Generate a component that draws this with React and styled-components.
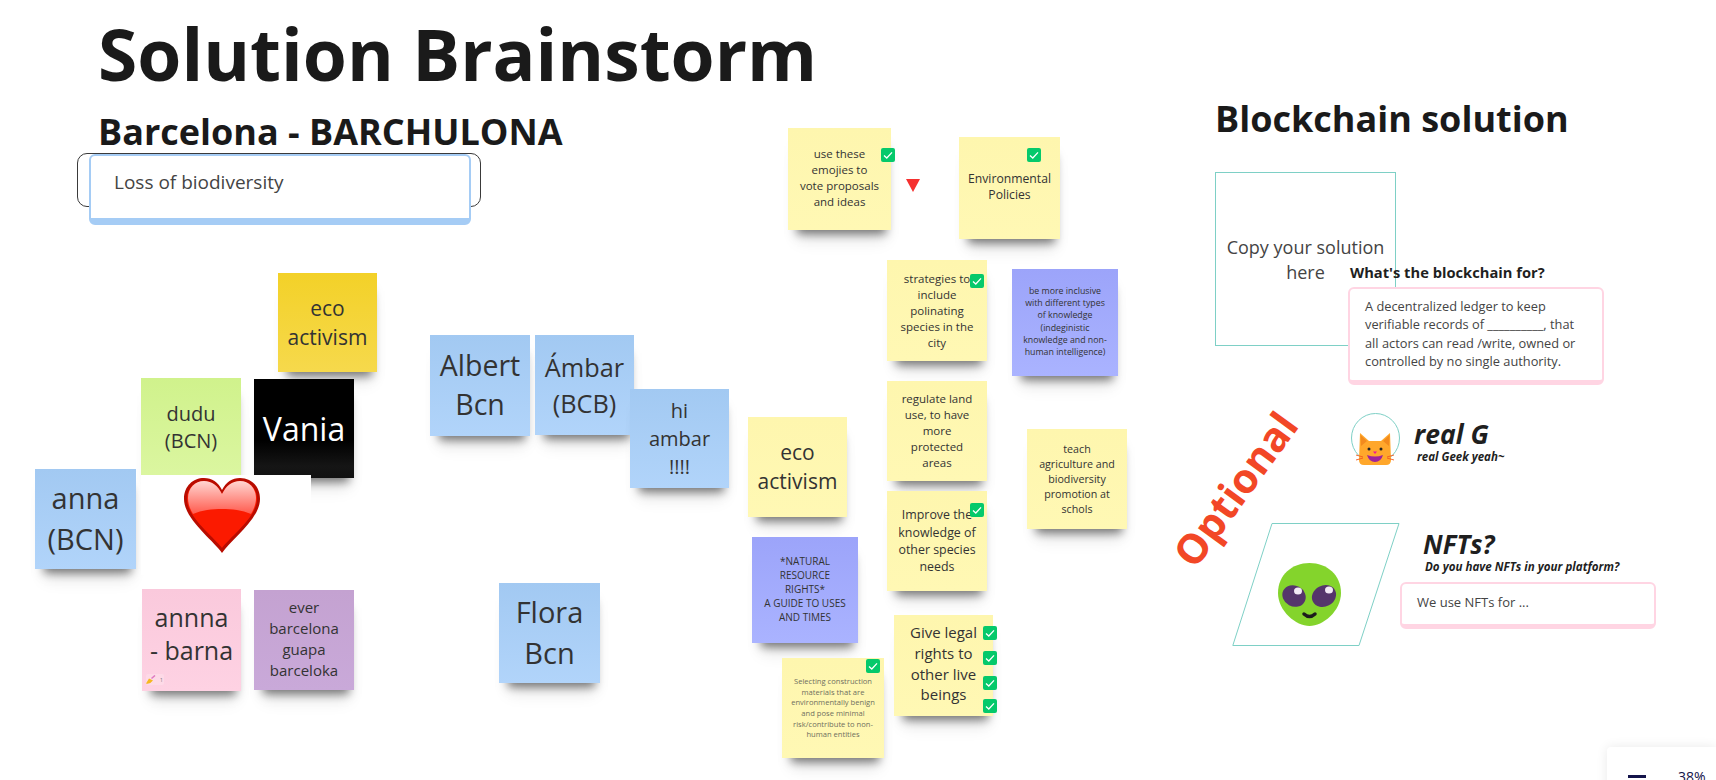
import React from "react";
import styled, { createGlobalStyle, css } from "styled-components";

const Global = createGlobalStyle`
  html, body { margin: 0; padding: 0; background: #fff; overflow: hidden; }
  body { font-family: "Open Sans", "Liberation Sans", sans-serif; color: #1a1a1a; }
`;

const at = css`
  position: absolute;
  left: ${(p) => p.$x}px;
  top: ${(p) => p.$y}px;
`;

const Board = styled.main`
  position: relative;
  width: 1716px;
  height: 780px;
  overflow: hidden;
  background: #fff;
`;

const Heading = styled.h1`
  ${at}
  margin: 0;
  font-size: ${(p) => p.$size}px;
  line-height: 1;
  font-weight: 700;
  color: #1a1a1a;
  white-space: nowrap;
`;

const Frame = styled.div`
  ${at}
  box-sizing: border-box;
  width: 404px;
  height: 54px;
  border: 1px solid #3a3a3a;
  border-radius: 10px;
`;

const Card = styled.div`
  ${at}
  box-sizing: border-box;
  width: ${(p) => p.$w}px;
  height: ${(p) => p.$h}px;
  padding: ${(p) => p.$pad};
  background: #fff;
  border: ${(p) => p.$b}px solid ${(p) => p.$c};
  border-bottom-width: ${(p) => p.$bb}px;
  border-radius: 6px;
  font-size: ${(p) => p.$size}px;
  line-height: ${(p) => p.$lh}px;
  color: #444;
  white-space: nowrap;
`;

const palette = {
  gold: "linear-gradient(#f3d128, #f6d94c)",
  lime: "linear-gradient(#d0f28c, #dbf6a0)",
  black: "linear-gradient(#000 62%, #151515 88%, #111)",
  blue: "linear-gradient(#a2c9f2, #b1d4fa)",
  pink: "linear-gradient(#fac9dc, #fed2e3)",
  purple: "linear-gradient(#c4a2d1, #c9a9d9)",
  yellow: "linear-gradient(#fef6ae, #fff8b4)",
  indigo: "linear-gradient(#9ca4fa, #aab3ff)",
};

const Note = styled.div`
  ${at}
  box-sizing: border-box;
  width: ${(p) => p.$w}px;
  height: ${(p) => p.$h}px;
  padding-bottom: ${(p) => (p.$up || 0) * 2}px;
  display: flex;
  flex-direction: column;
  align-items: center;
  justify-content: center;
  text-align: center;
  background: ${(p) => palette[p.$tone]};
  color: ${(p) => (p.$tone === "black" ? "#fff" : p.$ink || "#333")};
  font-size: ${(p) => p.$size}px;
  line-height: ${(p) => p.$lh}px;
  box-shadow: 2px 11px 9px -7px rgba(0, 0, 0, 0.5), 2px 18px 16px -8px rgba(0, 0, 0, 0.1);
  white-space: nowrap;
`;

const Line = styled.span`
  display: block;
`;

const Check = styled.svg`
  ${at}
  width: 14px;
  height: 14px;
`;

const Patch = styled.div`
  ${at}
  width: 170px;
  height: 100px;
  background: #fff;
`;

const Drawing = styled.svg`
  ${at}
  overflow: visible;
`;

const Outline = styled.div`
  ${at}
  box-sizing: border-box;
  width: 181px;
  height: 174px;
  border: 1px solid #7ed0c6;
`;

const Prompt = styled.p`
  margin: 62px 0 0;
  text-align: center;
  font-size: 18px;
  line-height: 25px;
  color: #444;
`;

const Label = styled.div`
  ${at}
  font-size: ${(p) => p.$size}px;
  line-height: 1;
  font-weight: 700;
  font-style: ${(p) => (p.$italic ? "italic" : "normal")};
  color: #1f1f1f;
  white-space: nowrap;
`;

const Stamp = styled.div`
  position: absolute;
  left: 1235px;
  top: 489px;
  transform: translate(-50%, -50%) rotate(-54deg);
  font-size: 41px;
  line-height: 1;
  font-weight: 700;
  color: #f24726;
`;

const Reaction = styled.div`
  ${at}
  display: flex;
  align-items: center;
  gap: 4px;
  width: 18px;
  height: 11px;
  font-size: 5px;
  color: #777;
  background: rgba(255, 255, 255, 0.2);
  border-radius: 2px;
`;

const ZoomPanel = styled.div`
  position: absolute;
  right: 0;
  top: 747px;
  width: 109px;
  height: 60px;
  display: flex;
  align-items: flex-start;
  background: #fff;
  border-radius: 4px 0 0 0;
  box-shadow: 0 0 12px rgba(0, 0, 0, 0.09);
`;

const Minus = styled.i`
  display: block;
  width: 18px;
  height: 3px;
  margin: 28px 0 0 21px;
  background: #14144a;
`;

const Percent = styled.span`
  margin: 20px 0 0 32px;
  font-size: 14px;
  line-height: 20px;
  color: #14144a;
`;

const notes = [
  { x: 278, y: 273, w: 99, h: 99, tone: "gold", size: 21, lh: 29, lines: ["eco", "activism"] },
  { x: 141, y: 378, w: 100, h: 97, tone: "lime", size: 20, lh: 27, lines: ["dudu", "(BCN)"] },
  { x: 254, y: 379, w: 100, h: 99, tone: "black", size: 32, lh: 42, lines: ["Vania"] },
  { x: 35, y: 469, w: 101, h: 100, tone: "blue", size: 29, lh: 41, up: 1, lines: ["anna", "(BCN)"] },
  { x: 142, y: 589, w: 99, h: 102, tone: "pink", size: 25, lh: 33, up: 6, lines: ["annna", "- barna"] },
  { x: 254, y: 590, w: 100, h: 100, tone: "purple", size: 15, lh: 21, up: 1, lines: ["ever", "barcelona", "guapa", "barceloka"] },
  { x: 430, y: 335, w: 100, h: 101, tone: "blue", size: 28.5, lh: 39, up: 1, lines: ["Albert", "Bcn"] },
  { x: 535, y: 335, w: 99, h: 100, tone: "blue", size: 25.3, lh: 36.5, lines: ["Ámbar", "(BCB)"] },
  { x: 630, y: 389, w: 99, h: 99, tone: "blue", size: 20, lh: 28, lines: ["hi", "ambar", "!!!!"] },
  { x: 748, y: 417, w: 99, h: 100, tone: "yellow", size: 21, lh: 29, lines: ["eco", "activism"] },
  { x: 752, y: 537, w: 106, h: 106, tone: "indigo", size: 10, lh: 14, up: 1, lines: ["*NATURAL", "RESOURCE", "RIGHTS*", "A GUIDE TO USES", "AND TIMES"] },
  { x: 499, y: 583, w: 101, h: 100, tone: "blue", size: 29, lh: 41, up: 1, lines: ["Flora", "Bcn"] },
  { x: 788, y: 128, w: 103, h: 102, tone: "yellow", size: 11.5, lh: 16.2, up: 1, lines: ["use these", "emojies to", "vote proposals", "and ideas"] },
  { x: 959, y: 137, w: 101, h: 102, tone: "yellow", size: 12.2, lh: 16, up: 1, lines: ["Environmental", "Policies"] },
  { x: 887, y: 260, w: 100, h: 101, tone: "yellow", size: 11.5, lh: 16, lines: ["strategies to", "include", "polinating", "species in the", "city"] },
  { x: 1012, y: 269, w: 106, h: 107, tone: "indigo", size: 8.8, lh: 12.3, up: 1, lines: ["be more inclusive", "with different types", "of knowledge", "(indeginistic", "knowledge and non-", "human intelligence)"] },
  { x: 887, y: 381, w: 100, h: 100, tone: "yellow", size: 11.5, lh: 16, lines: ["regulate land", "use, to have", "more", "protected", "areas"] },
  { x: 887, y: 491, w: 100, h: 100, tone: "yellow", size: 12.4, lh: 17.4, lines: ["Improve the", "knowledge of", "other species", "needs"] },
  { x: 1027, y: 429, w: 100, h: 100, tone: "yellow", size: 10.7, lh: 15, lines: ["teach", "agriculture and", "biodiversity", "promotion at", "schols"] },
  { x: 894, y: 615, w: 99, h: 101, tone: "yellow", size: 15, lh: 20.7, up: 2, lines: ["Give legal", "rights to", "other live", "beings"] },
  { x: 782, y: 658, w: 102, h: 100, tone: "yellow", size: 7.6, lh: 10.7, ink: "#6f6f5e", lines: ["Selecting construction", "materials that are", "environmentally benign", "and pose minimal", "risk/contribute to non-", "human entities"] },
];

const checks = [
  [881, 148], [1027, 148], [970, 274], [970, 503], [866, 659],
  [983, 626], [983, 651], [983, 676], [983, 699],
];

const CheckMark = ({ x, y }) => (
  <Check $x={x} $y={y} viewBox="0 0 14 14">
    <rect width="14" height="14" rx="2" fill="#05c96b" />
    <path d="M3 7.4 5.8 10 11 4.4" fill="none" stroke="#fff" strokeWidth="1.3" />
  </Check>
);

const Heart = () => (
  <Drawing $x={184} $y={478} width="76" height="75" viewBox="0 0 76 75">
    <defs>
      <linearGradient id="gloss" x1="0" y1="0" x2="0" y2="1">
        <stop offset="0" stopColor="#ffd6d2" />
        <stop offset="1" stopColor="#ff5a4d" />
      </linearGradient>
    </defs>
    <path d="M38 75C29 62 0 41 0 21 0 8 9 0 20 0c8 0 14 4 18 12C42 4 48 0 56 0c11 0 20 8 20 21 0 20-29 41-38 54Z" fill="#b80c00" />
    <path d="M38 70C29 58 3 39 3 21 3 10 11 3 20 3c8 0 14 5 18 13C42 8 48 3 56 3c9 0 17 7 17 18 0 18-26 37-35 49Z" fill="#fb1a00" />
    <path d="M38 16C34 8 28 3 20 3 11 3 4 10 4 20c0 6 2 11 5 16 9-4 19-5 29-5s20 1 29 5c3-5 5-10 5-16 0-10-7-17-16-17-8 0-14 5-18 13Z" fill="url(#gloss)" />
  </Drawing>
);

const Cat = () => (
  <Drawing $x={1356} $y={431} width="38" height="35" viewBox="0 0 38 35">
    <path d="M4 2 13 10H25L34 2 35 29Q35 34 30 34H8Q3 34 3 29Z" fill="#ffa72b" />
    <path d="M4.5 4 11 10 5 15ZM33.5 4 27 10 33 15Z" fill="#f28a1e" />
    <circle cx="13" cy="18" r="1.5" fill="#222" />
    <circle cx="25" cy="18" r="1.5" fill="#222" />
    <path d="M17 20.5h4L19 23Z" fill="#f0129a" />
    <path d="M11 24Q19 27 27 24 25 31 19 31 13 31 11 24Z" fill="#a0229a" />
    <path d="M0 24 7 26M0 29 7 27M38 24 31 26M38 29 31 27" stroke="#f2581e" strokeWidth="0.9" fill="none" />
  </Drawing>
);

const Alien = () => (
  <Drawing $x={1278} $y={563} width="63" height="63" viewBox="0 0 63 63">
    <path d="M31.5 0C49 0 63 12 63 30 63 48 45 63 31.5 63 18 63 0 48 0 30 0 12 14 0 31.5 0Z" fill="#84d42c" />
    <ellipse cx="16" cy="33" rx="12" ry="10.5" fill="#55356b" transform="rotate(28 16 33)" />
    <ellipse cx="46" cy="33" rx="12.5" ry="10.5" fill="#55356b" transform="rotate(-28 46 33)" />
    <ellipse cx="20" cy="28" rx="4" ry="3.5" fill="#f2e9f5" />
    <ellipse cx="51" cy="27" rx="4" ry="3.5" fill="#f2e9f5" />
    <path d="M26 51Q31.5 56 37 51" fill="none" stroke="#1c1c1c" strokeWidth="3.5" strokeLinecap="round" />
  </Drawing>
);

const Broom = () => (
  <svg width="10" height="9" viewBox="0 0 10 9">
    <path d="M0 8.5 3 3.5 7 5.5Q4 9.500 0 8.5Z" fill="#f5b81f" />
    <path d="M5.500 3.500 9 0.500" stroke="#e07bc0" strokeWidth="1.6" />
  </svg>
);

export default function App() {
  return (
    <Board>
      <Global />
      <Heading $x={98} $y={18} $size={71.3}>Solution Brainstorm</Heading>
      <Heading $x={98} $y={114} $size={36}>Barcelona - BARCHULONA</Heading>
      <Frame $x={77} $y={153} />
      <Card $x={89} $y={154} $w={382} $h={71} $b={2} $bb={7} $c="#a5ccf5" $size={19} $lh={26} $pad="13px 23px">
        Loss of biodiversity
      </Card>

      <Heading $x={1215} $y={101} $size={36}>Blockchain solution</Heading>
      <Outline $x={1215} $y={172}>
        <Prompt>Copy your solution<br />here</Prompt>
      </Outline>
      <Label $x={1350} $y={265} $size={14.7}>What's the blockchain for?</Label>
      <Card $x={1348} $y={287} $w={256} $h={98} $b={2} $bb={5} $c="#ffd5e3" $size={12.8} $lh={18.3} $pad="8px 15px">
        <Line>A decentralized ledger to keep</Line>
        <Line>verifiable records of __________, that</Line>
        <Line>all actors can read /write, owned or</Line>
        <Line>controlled by no single authority.</Line>
      </Card>

      {notes.map((n) => (
        <Note key={n.lines.join() + n.x} $x={n.x} $y={n.y} $w={n.w} $h={n.h} $tone={n.tone} $size={n.size} $lh={n.lh} $ink={n.ink} $up={n.up}>
          {n.lines.map((l) => <Line key={l}>{l}</Line>)}
        </Note>
      ))}

      <Patch $x={141} $y={475} />
      <Heart />
      <Reaction $x={146} $y={674}><Broom />1</Reaction>

      {checks.map(([x, y]) => <CheckMark key={`${x}-${y}`} x={x} y={y} />)}
      <Drawing $x={906} $y={179} width="14" height="13" viewBox="0 0 14 13">
        <path d="M0 0H14L7 13Z" fill="#f5302f" />
      </Drawing>

      <Stamp>Optional</Stamp>
      <Drawing $x={1351} $y={413} width="49" height="50" viewBox="0 0 49 50">
        <ellipse cx="24.5" cy="25" rx="24" ry="24.5" fill="none" stroke="#7ed0c6" />
      </Drawing>
      <Cat />
      <Label $x={1414} $y={421} $size={26.5} $italic>real G</Label>
      <Label $x={1417} $y={451} $size={11.5} $italic>real Geek yeah~</Label>

      <Drawing $x={1232} $y={523} width="168" height="123" viewBox="0 0 168 123">
        <path d="M40 .5H167L127 122.5H.8Z" fill="none" stroke="#7ed0c6" />
      </Drawing>
      <Alien />
      <Label $x={1423} $y={531} $size={26} $italic>NFTs?</Label>
      <Label $x={1425} $y={561} $size={11.6} $italic>Do you have NFTs in your platform?</Label>
      <Card $x={1400} $y={582} $w={256} $h={47} $b={2} $bb={5} $c="#ffd5e3" $size={13} $lh={18} $pad="9px 15px">
        We use NFTs for ...
      </Card>

      <ZoomPanel>
        <Minus />
        <Percent>38%</Percent>
      </ZoomPanel>
    </Board>
  );
}
